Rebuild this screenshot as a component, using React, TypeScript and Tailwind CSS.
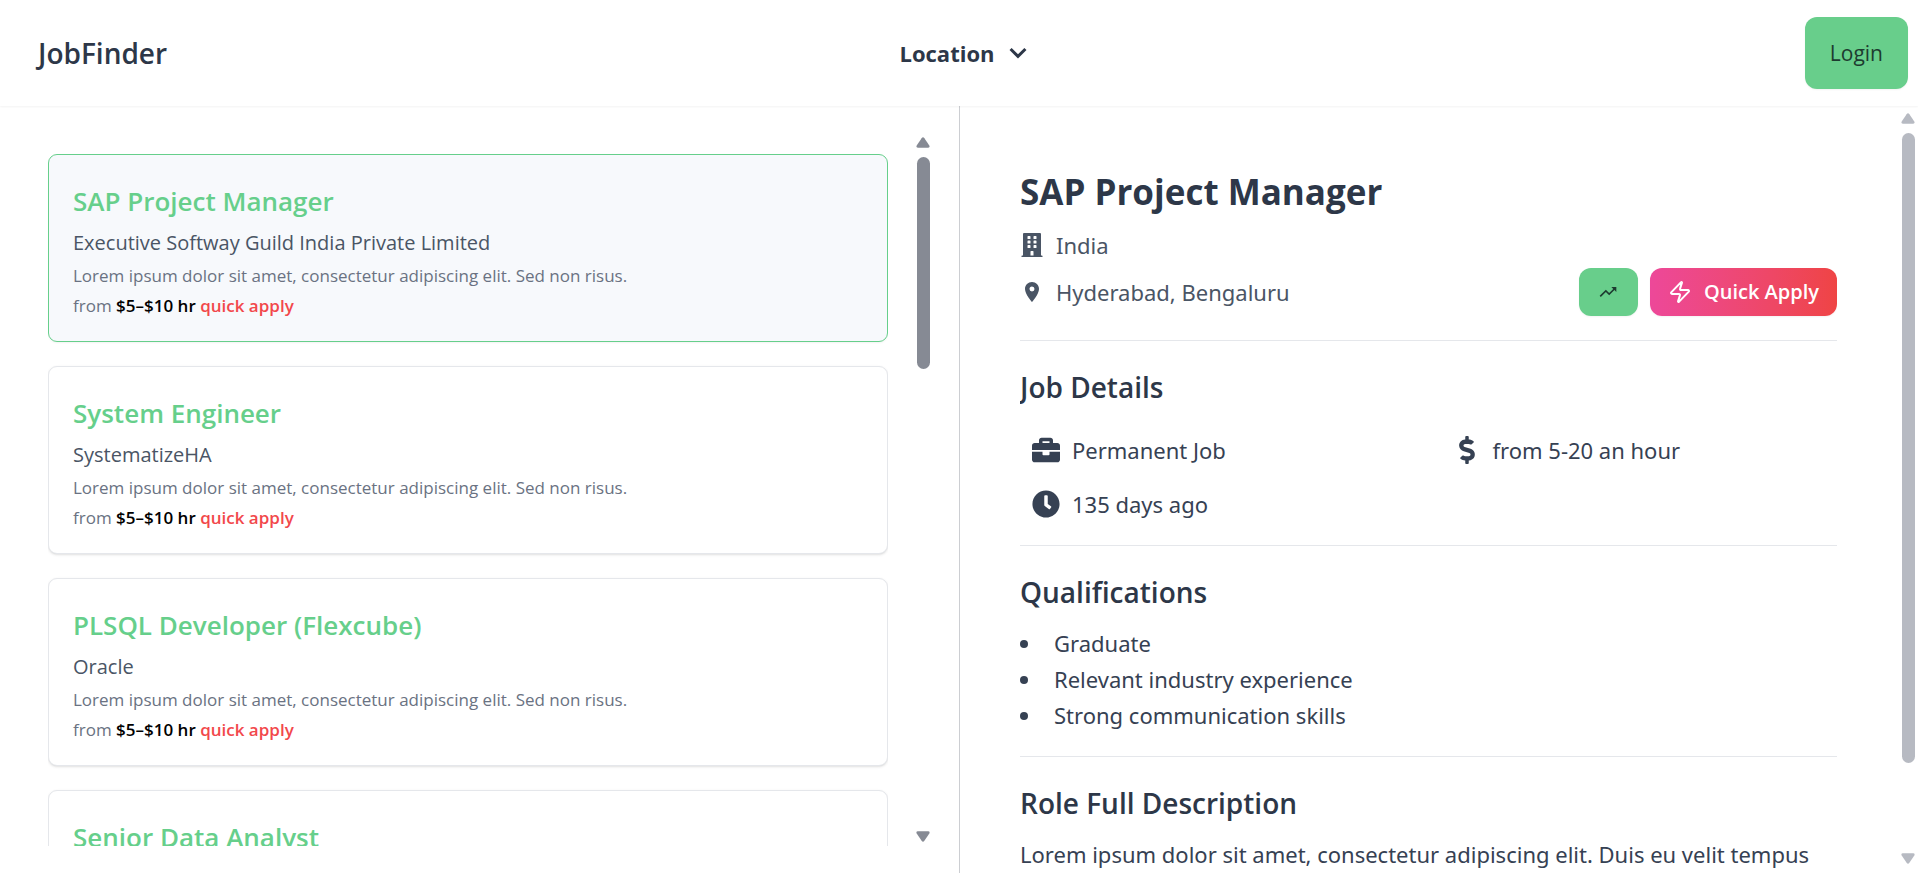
import React from "react";
import { FaBuilding, FaBriefcase, FaDollarSign, FaClock } from "react-icons/fa";
import { MdLocationOn, MdTrendingUp } from "react-icons/md";
import { Zap } from "lucide-react";

type Job = { title: string; company: string };

const jobs: Job[] = [
  { title: "SAP Project Manager", company: "Executive Softway Guild India Private Limited" },
  { title: "System Engineer", company: "SystematizeHA" },
  { title: "PLSQL Developer (Flexcube)", company: "Oracle" },
  { title: "Senior Data Analyst", company: "Oracle" },
];

const qualifications = ["Graduate", "Relevant industry experience", "Strong communication skills"];

function Arrow({ down = false }: { down?: boolean }) {
  return (
    <svg viewBox="0 0 14 11" className="h-[11px] w-[14px] shrink-0" fill="currentColor" aria-hidden="true">
      <path
        d="M5.6 1.2Q7-.6 8.4 1.2L13.3 8.4Q14.3 10.6 12.2 10.8H1.8Q-.3 10.6.7 8.4Z"
        transform={down ? "rotate(180 7 5.5)" : undefined}
      />
    </svg>
  );
}

function ScrollRail({ thumb, className }: { thumb: string; className: string }) {
  return (
    <div aria-hidden="true" className={`flex shrink-0 flex-col items-center gap-[9px] ${className}`}>
      <Arrow />
      <div className="min-h-0 w-full flex-1">
        <div className={`mx-auto w-[13px] rounded-full bg-current ${thumb}`} />
      </div>
      <Arrow down />
    </div>
  );
}

function JobCard({ job, selected }: { job: Job; selected: boolean }) {
  return (
    <article
      className={`rounded-[9px] border px-6 pt-[26px] pb-[22px] ${
        selected ? "border-[#66cf8b] bg-[#f7f9fc] shadow-xs" : "border-gray-200 bg-white shadow-sm"
      }`}
    >
      <h2 className="mb-[6px] text-[26px] leading-10 font-semibold text-[#66cf8b]">{job.title}</h2>
      <p className="mb-[3px] text-[20px] leading-8 text-gray-600">{job.company}</p>
      <p className="mb-[3px] text-[17px] leading-[27px] text-gray-500">
        Lorem ipsum dolor sit amet, consectetur adipiscing elit. Sed non risus.
      </p>
      <p className="text-[17px] leading-[27px] text-gray-500">
        from <span className="font-semibold text-black">$5–$10 hr</span>{" "}
        <span className="font-semibold text-[#f2484b]">quick apply</span>
      </p>
    </article>
  );
}

const heading = "text-[28px] leading-[45px] font-semibold text-[#2d3748]";
const body = "font-['Noto_Sans','Open_Sans',sans-serif] text-[22px] leading-9";
const hideBar = "overflow-y-auto [scrollbar-width:none]";

export default function App() {
  return (
    <div className="flex h-screen flex-col bg-white font-['Open_Sans','Noto_Sans',sans-serif] text-[#2d3748]">
      <header className="relative z-10 flex h-[106px] shrink-0 items-center justify-between bg-white pr-[10px] pl-6 shadow-xs">
        <div className="flex-1">
          <div className="pl-[14px] text-[28px] leading-[45px] font-semibold">JobFinder</div>
        </div>
        <button type="button" className="flex items-center gap-2 text-[22px] leading-9 font-bold">
          Location
          <svg viewBox="0 0 20 20" className="size-[30px]" fill="currentColor" aria-hidden="true">
            <path d="M9.293 12.95l.707.707L15.657 8l-1.414-1.414L10 10.828 5.757 6.586 4.343 8z" />
          </svg>
        </button>
        <div className="flex flex-1 justify-end">
          <button
            type="button"
            className="h-[72px] rounded-xl bg-[#68ce8b] px-[25px] text-[21px] leading-8 font-medium text-[#1d3b30] shadow-xs"
          >
            Login
          </button>
        </div>
      </header>

      <main className="flex min-h-0 flex-1">
        <section aria-label="Jobs" className="flex w-1/2 pt-6 pr-[29px] pb-[27px] pl-12">
          <div className={`flex min-w-0 flex-1 flex-col gap-6 pt-6 ${hideBar}`}>
            {jobs.map((job, i) => (
              <JobCard key={job.title} job={job} selected={i === 0} />
            ))}
          </div>
          <ScrollRail className="ml-7 w-[14px] pt-[7px] pb-1 text-[#868a94]" thumb="h-[212px]" />
        </section>

        <section
          aria-label="Job description"
          className="flex w-1/2 min-w-0 border-l border-[#ccced2] pr-[3px] pl-[60px]"
        >
          <div className={`mr-16 min-w-0 flex-1 pt-[63px] ${hideBar}`}>
            <div className="border-b border-gray-200 pb-6">
              <h1 className="mb-[13px] text-[35px] leading-[45px] font-bold">SAP Project Manager</h1>
              <p className={`mb-[5px] flex items-center gap-3 text-gray-600 ${body}`}>
                <FaBuilding className="size-6" />
                India
              </p>
              <div className="flex h-12 items-center gap-3">
                <p className={`flex flex-1 items-center gap-3 text-gray-600 ${body}`}>
                  <MdLocationOn className="size-6" />
                  Hyderabad, Bengaluru
                </p>
                <button
                  type="button"
                  aria-label="Trends"
                  className="flex h-12 w-[59px] items-center justify-center rounded-xl bg-[#68ce8b] text-[#1d3b30] shadow-xs"
                >
                  <MdTrendingUp className="size-5" />
                </button>
                <button
                  type="button"
                  className="flex h-12 items-center gap-3 rounded-xl bg-linear-to-r from-[#ed4899] to-[#ef4444] px-[18px] text-[20px] leading-8 font-semibold text-white shadow-xs"
                >
                  <Zap className="size-6" />
                  Quick Apply
                </button>
              </div>
            </div>

            <div className="border-b border-gray-200 pt-6 pb-[23px]">
              <h2 className={`mb-[22px] ${heading}`}>Job Details</h2>
              <ul className={`grid grid-cols-2 gap-x-9 gap-y-[18px] pl-3 text-gray-700 ${body}`}>
                <li className="flex items-center gap-3">
                  <FaBriefcase className="size-7" />
                  Permanent Job
                </li>
                <li className="flex items-center gap-3">
                  <FaDollarSign className="size-7" />
                  from 5-20 an hour
                </li>
                <li className="flex items-center gap-3">
                  <FaClock className="size-7" />
                  135 days ago
                </li>
              </ul>
            </div>

            <div className="border-b border-gray-200 pt-6 pb-[23px]">
              <h2 className={`mb-[10px] ${heading}`}>Qualifications</h2>
              <ul className={`list-inside list-disc text-gray-700 ${body}`}>
                {qualifications.map((item) => (
                  <li key={item}>
                    <span className="pl-[3px]">{item}</span>
                  </li>
                ))}
              </ul>
            </div>

            <div className="pt-6 pb-6">
              <h2 className={`mb-[10px] ${heading}`}>Role Full Description</h2>
              <p className={`text-gray-700 ${body}`}>
                Lorem ipsum dolor sit amet, consectetur adipiscing elit. Duis eu velit tempus
              </p>
            </div>
          </div>
          <ScrollRail className="w-[14px] pt-[7px] pb-[9px] text-[#b7bac2]" thumb="h-[630px]" />
        </section>
      </main>
    </div>
  );
}
